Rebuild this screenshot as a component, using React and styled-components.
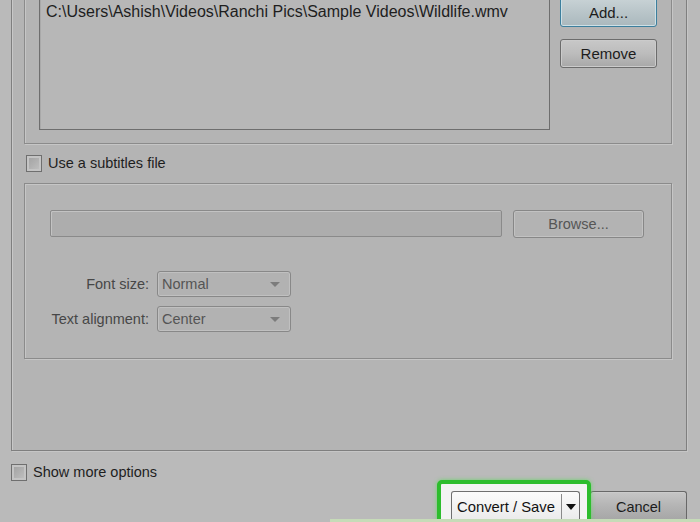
import styled, { createGlobalStyle } from "styled-components";

const GlobalStyle = createGlobalStyle`
  html, body {
    margin: 0;
    padding: 0;
    background: #bababa;
  }
  body {
    font-family: "Liberation Sans", Arial, sans-serif;
    color: #222;
  }
`;

function Checkbox() {
  return (
    <CheckBox>
      <CheckInner />
    </CheckBox>
  );
}

function Dropdown({ value }) {
  return (
    <Select>
      <span>{value}</span>
      <SelectArrow />
    </Select>
  );
}

export default function App() {
  return (
    <Screen>
      <GlobalStyle />
      <Panel>
        <GroupBox $top>
          <FileRow>
            <ListBox>
              C:\Users\Ashish\Videos\Ranchi Pics\Sample Videos\Wildlife.wmv
            </ListBox>
            <SideButtons>
              <Button $primary $height={30}>
                Add...
              </Button>
              <Button $height={29}>Remove</Button>
            </SideButtons>
          </FileRow>
        </GroupBox>

        <CheckRow $indent={2}>
          <Checkbox />
          <Label>Use a subtitles file</Label>
        </CheckRow>

        <GroupBox>
          <SubtitleBody>
            <BrowseRow>
              <TextField />
              <BrowseButton>Browse...</BrowseButton>
            </BrowseRow>
            <OptionsGrid>
              <FieldLabel>Font size:</FieldLabel>
              <Dropdown value="Normal" />
              <FieldLabel>Text alignment:</FieldLabel>
              <Dropdown value="Center" />
            </OptionsGrid>
          </SubtitleBody>
        </GroupBox>
      </Panel>

      <CheckRow $indent={11} $bottom>
        <Checkbox />
        <Label>Show more options</Label>
      </CheckRow>

      <ActionRow>
        <Highlight>
          <ConvertButton>
            <ConvertText>Convert / Save</ConvertText>
            <SplitArrow>
              <BlackArrow />
            </SplitArrow>
          </ConvertButton>
        </Highlight>
        <CancelButton>Cancel</CancelButton>
      </ActionRow>
      <CaptionEdge />
    </Screen>
  );
}

const Screen = styled.div`
  position: relative;
  width: 700px;
  height: 522px;
  overflow: hidden;
  background: #bababa;
`;

const Panel = styled.div`
  margin: -20px 13px 0 11px;
  padding: 0 14px 91px 12px;
  background: #b4b4b4;
  border: 1px solid #7f7f7f;
  box-shadow: inset 1px 1px 0 #c8c8c8, 1px 1px 0 #c6c6c6;
`;

const GroupBox = styled.div`
  border: 1px solid #8b8b8b;
  border-top-color: ${(p) => (p.$top ? "transparent" : "#8b8b8b")};
  box-shadow: inset 1px 1px 0 #c6c6c6, 1px 1px 0 #c6c6c6;
`;

const FileRow = styled.div`
  display: flex;
  gap: 10px;
  padding: 0 13px 13px 14px;
`;

const ListBox = styled.div`
  width: 497px;
  height: 127px;
  margin-top: 7px;
  padding: 12px 6px 0;
  background: #b7b7b7;
  border: 1px solid #6e6e6e;
  box-shadow: inset 1px 1px 0 #a9a9a9;
  font-size: 16px;
  line-height: 20px;
  color: #1e1e1e;
  white-space: nowrap;
`;

const SideButtons = styled.div`
  display: flex;
  flex-direction: column;
  gap: 12px;
  margin-top: 15px;
`;

const Button = styled.div`
  width: 97px;
  height: ${(p) => p.$height}px;
  box-sizing: border-box;
  display: flex;
  align-items: center;
  justify-content: center;
  border-radius: 3px;
  font-size: 15px;
  color: #1c1c1c;
  border: 1px solid ${(p) => (p.$primary ? "#3d7f9d" : "#6c6c6c")};
  background: ${(p) =>
    p.$primary
      ? "linear-gradient(#c9d3d6, #b9c5c9 50%, #aab8bd)"
      : "linear-gradient(#c8c8c8, #bcbcbc 50%, #a8a8a8)"};
  box-shadow: inset 0 0 0 1px
    ${(p) => (p.$primary ? "#cde0e6" : "#cbcbcb")};
`;

const CheckRow = styled.div`
  display: flex;
  align-items: center;
  gap: 6px;
  height: 18px;
  margin: ${(p) => (p.$bottom ? "12px 0 0" : "10px 0 11px")};
  padding-left: ${(p) => p.$indent}px;
`;

const CheckBox = styled.div`
  width: 16px;
  height: 17px;
  box-sizing: border-box;
  border: 1px solid #6f6f6f;
  background: #c4c4c4;
  padding: 2px;
`;

const CheckInner = styled.div`
  width: 100%;
  height: 100%;
  background: linear-gradient(135deg, #a4a4a4, #bdbdbd);
`;

const Label = styled.span`
  font-size: 14.5px;
  color: #1e1e1e;
`;

const SubtitleBody = styled.div`
  padding: 26px 25px 24px 25px;
`;

const BrowseRow = styled.div`
  display: flex;
  gap: 11px;
  align-items: flex-start;
`;

const TextField = styled.div`
  width: 452px;
  height: 27px;
  box-sizing: border-box;
  border: 1px solid #8a8a8a;
  border-radius: 2px;
  background: #adadad;
  box-shadow: inset 1px 1px 0 #c3c3c3;
`;

const BrowseButton = styled.div`
  width: 131px;
  height: 28px;
  box-sizing: border-box;
  display: flex;
  align-items: center;
  justify-content: center;
  border: 1px solid #878787;
  border-radius: 3px;
  background: #b3b3b3;
  box-shadow: inset 0 0 0 1px #c2c2c2;
  font-size: 14.5px;
  color: #565656;
`;

const OptionsGrid = styled.div`
  display: grid;
  grid-template-columns: 99px 134px;
  column-gap: 8px;
  row-gap: 9px;
  align-items: center;
  margin-top: 33px;
  margin-bottom: 2px;
`;

const FieldLabel = styled.span`
  text-align: right;
  font-size: 14.5px;
  color: #474747;
  white-space: nowrap;
`;

const Select = styled.div`
  height: 26px;
  box-sizing: border-box;
  display: flex;
  align-items: center;
  justify-content: space-between;
  padding: 0 10px 0 4px;
  border: 1px solid #888;
  border-radius: 3px;
  background: #b2b2b2;
  box-shadow: inset 0 0 0 1px #c0c0c0;
  font-size: 14.5px;
  color: #555;
`;

const SelectArrow = styled.span`
  width: 0;
  height: 0;
  border-left: 5px solid transparent;
  border-right: 5px solid transparent;
  border-top: 5px solid #7c7c7c;
`;

const ActionRow = styled.div`
  display: flex;
  justify-content: flex-end;
  align-items: flex-start;
  margin-top: -1px;
  padding-right: 13px;
`;

const Highlight = styled.div`
  position: relative;
  z-index: 1;
  width: 154px;
  height: 50px;
  box-sizing: border-box;
  padding: 7px 7px 0 10px;
  border: 4px solid #2dbd2d;
  border-radius: 5px;
  background: #f3f3f3;
  box-shadow: 0 0 4px rgba(90, 220, 90, 0.8);
`;

const ConvertButton = styled.div`
  display: flex;
  height: 29px;
  box-sizing: border-box;
  border: 1px solid #6f6f6f;
  border-bottom: none;
  border-radius: 3px 3px 0 0;
  background: linear-gradient(#fbfbfb, #ebebeb);
`;

const ConvertText = styled.span`
  flex: 1;
  display: flex;
  align-items: center;
  padding: 1px 0 0 5px;
  font-size: 14.8px;
  color: #111;
`;

const SplitArrow = styled.span`
  width: 17px;
  display: flex;
  align-items: center;
  justify-content: center;
  border-left: 1px solid #8a8a8a;
  margin: 2px 0 0;
`;

const BlackArrow = styled.span`
  width: 0;
  height: 0;
  border-left: 5px solid transparent;
  border-right: 5px solid transparent;
  border-top: 6px solid #111;
`;

const CancelButton = styled.div`
  width: 97px;
  height: 29px;
  box-sizing: border-box;
  margin: 11px 0 0 -1px;
  padding-top: 1px;
  display: flex;
  align-items: center;
  justify-content: center;
  border: 1px solid #686868;
  border-bottom: none;
  border-radius: 3px 3px 0 0;
  background: linear-gradient(#c6c6c6, #b4b4b4 50%, #a6a6a6);
  box-shadow: inset 0 1px 0 #cbcbcb;
  font-size: 14.5px;
  color: #1c1c1c;
`;

const CaptionEdge = styled.div`
  position: absolute;
  left: 330px;
  right: 0;
  bottom: 0;
  height: 3px;
  z-index: 2;
  background: #c6dbb8;
`;
